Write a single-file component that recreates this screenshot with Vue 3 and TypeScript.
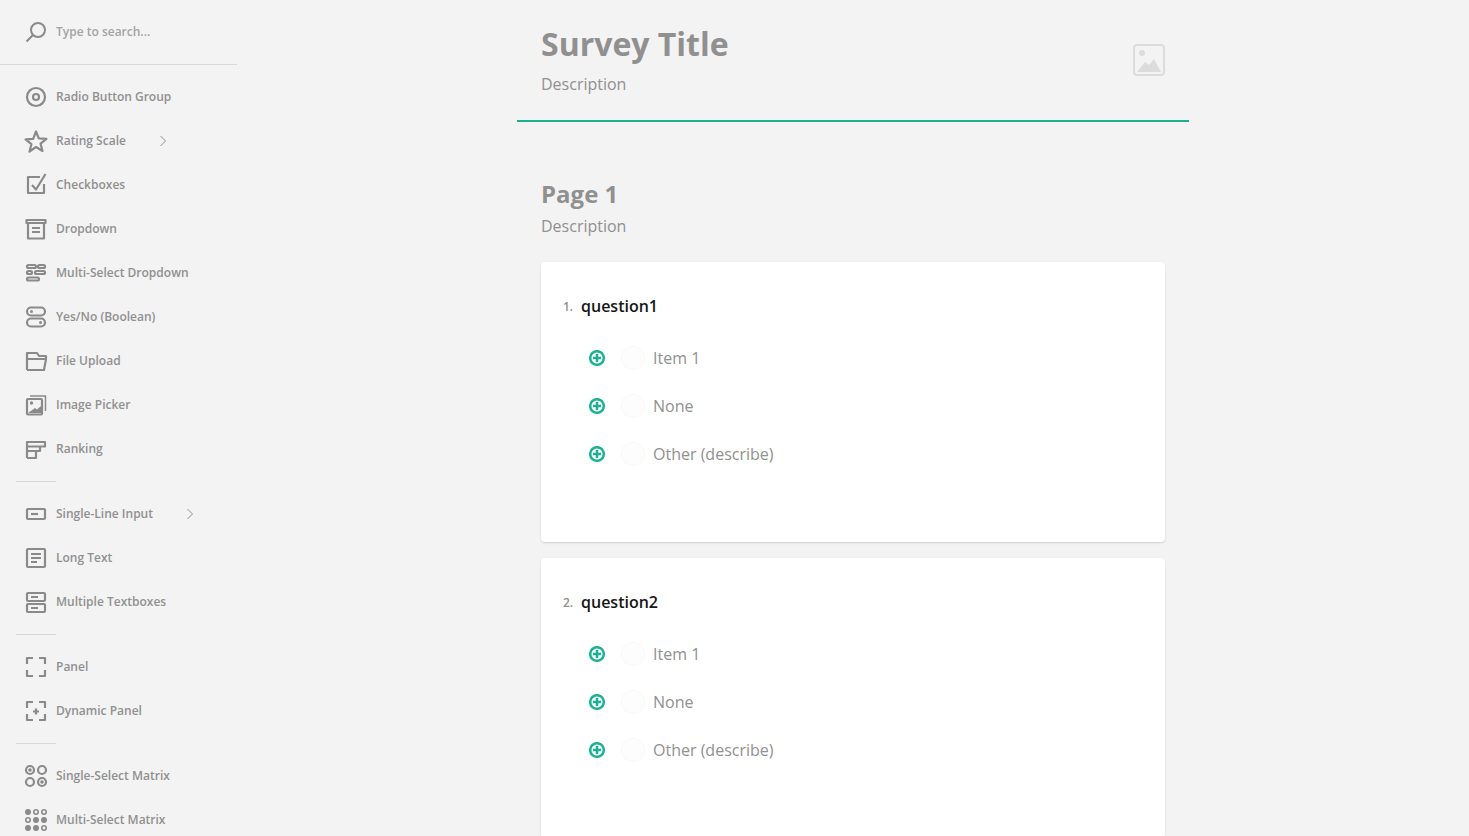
<script setup lang="ts">
interface Item { label: string; icon: string; arrow?: boolean }
const groups: Item[][] = [
  [
    { label: 'Radio Button Group', icon: 'radio' },
    { label: 'Rating Scale', icon: 'star', arrow: true },
    { label: 'Checkboxes', icon: 'check' },
    { label: 'Dropdown', icon: 'dropdown' },
    { label: 'Multi-Select Dropdown', icon: 'multi' },
    { label: 'Yes/No (Boolean)', icon: 'bool' },
    { label: 'File Upload', icon: 'file' },
    { label: 'Image Picker', icon: 'image' },
    { label: 'Ranking', icon: 'ranking' },
  ],
  [
    { label: 'Single-Line Input', icon: 'input', arrow: true },
    { label: 'Long Text', icon: 'long' },
    { label: 'Multiple Textboxes', icon: 'boxes' },
  ],
  [
    { label: 'Panel', icon: 'panel' },
    { label: 'Dynamic Panel', icon: 'dyn' },
  ],
  [
    { label: 'Single-Select Matrix', icon: 'smatrix' },
    { label: 'Multi-Select Matrix', icon: 'mmatrix' },
  ],
]
const questions = [
  { no: '1.', title: 'question1' },
  { no: '2.', title: 'question2' },
]
const choices = ['Item 1', 'None', 'Other (describe)']
const mmDots = [
  { x: 4, y: 4, on: true }, { x: 12, y: 4, on: false }, { x: 20, y: 4, on: false },
  { x: 4, y: 12, on: false }, { x: 12, y: 12, on: true }, { x: 20, y: 12, on: true },
  { x: 4, y: 20, on: true }, { x: 12, y: 20, on: true }, { x: 20, y: 20, on: false },
]
</script>

<template>
  <div class="page">
    <aside class="side">
      <div class="search">
        <svg class="ico" viewBox="0 0 24 24" fill="none" stroke="#8a8a8a" stroke-width="2">
          <circle cx="14" cy="10" r="7" />
          <path d="M9 15l-6.500 6.500" />
        </svg>
        <span class="search-text">Type to search...</span>
      </div>
      <div class="list">
        <template v-for="(group, gi) in groups" :key="gi">
          <div v-if="gi > 0" class="sep"></div>
          <div v-for="item in group" :key="item.label" class="row">
            <svg class="ico" viewBox="0 0 24 24" fill="none" stroke="#8a8a8a" stroke-width="2.200" stroke-linejoin="round">
              <template v-if="item.icon === 'radio'">
                <circle cx="12" cy="12" r="9" /><circle cx="12" cy="12" r="3" />
              </template>
              <path v-else-if="item.icon === 'star'" d="M12 2.500l2.800 6.900 7.600.5-5.800 4.800 1.900 7.300L12 18l-6.500 4.500 1.900-7.300-5.800-4.800 7.600-.5z" />
              <template v-else-if="item.icon === 'check'">
                <path d="M16 4H4v16h16v-9" /><path d="M8 12l4 4.500L21.500 1" />
              </template>
              <template v-else-if="item.icon === 'dropdown'">
                <path d="M2.500 3h19v3h-19zM4 6v15.500h16V6M8 11h8M8 15h8" />
              </template>
              <template v-else-if="item.icon === 'multi'">
                <rect x="3" y="4" width="9" height="3" rx="1.500" /><rect x="14" y="4" width="7" height="3" rx="1.500" />
                <rect x="3" y="10" width="5" height="3" rx="1.500" /><rect x="11" y="10" width="10" height="3" rx="1.500" />
                <rect x="3" y="16.500" width="12" height="3" rx="1.500" />
              </template>
              <template v-else-if="item.icon === 'bool'">
                <rect x="3" y="2.500" width="18" height="8" rx="4" /><rect x="3" y="13.500" width="18" height="8" rx="4" />
                <circle cx="7.500" cy="6.500" r="1.500" fill="#8a8a8a" stroke="none" /><circle cx="16.500" cy="17.500" r="1.500" fill="#8a8a8a" stroke="none" />
              </template>
              <path v-else-if="item.icon === 'file'" d="M3 21V4h10l2 3h7v3H3M3 21h17l2-11" />
              <template v-else-if="item.icon === 'image'">
                <rect x="3" y="6" width="15" height="15.500" rx="1" /><path stroke-width="1.500" d="M6 3h15.500v15" />
                <path fill="#8a8a8a" stroke="none" d="M4 20l7-5 2 1.500 4-3.500v7H4z" /><circle cx="7.500" cy="10" r="1.700" fill="#8a8a8a" stroke="none" />
              </template>
              <path v-else-if="item.icon === 'ranking'" d="M3 21V5h18v4.500H3M3 9.500h13V14H3M3 14h9v7H3" />
              <template v-else-if="item.icon === 'input'">
                <rect x="3" y="7" width="18" height="10" rx="1" /><path d="M7 12h7" />
              </template>
              <template v-else-if="item.icon === 'long'">
                <rect x="3" y="3" width="18" height="18" rx="1" /><path d="M7 8h10M7 12h10M7 16h6" />
              </template>
              <template v-else-if="item.icon === 'boxes'">
                <rect x="3" y="3" width="18" height="8" rx="1" /><rect x="3" y="14" width="18" height="8" rx="1" />
                <path d="M7 7h7M7 18h7" />
              </template>
              <path v-else-if="item.icon === 'panel'" d="M9 3H3v6M15 3h6v6M3 15v6h6M21 15v6h-6" />
              <template v-else-if="item.icon === 'dyn'">
                <path d="M9 3H3v6M15 3h6v6M3 15v6h6M21 15v6h-6" /><path d="M12 9.500v6M9 12.500h6" />
              </template>
              <template v-else-if="item.icon === 'smatrix'">
                <circle cx="6" cy="6" r="4" /><circle cx="6" cy="6" r="1.800" fill="#8a8a8a" stroke="none" />
                <circle cx="18" cy="6" r="4" />
                <circle cx="6" cy="18" r="4" />
                <circle cx="18" cy="18" r="4" /><circle cx="18" cy="18" r="1.800" fill="#8a8a8a" stroke="none" />
              </template>
              <template v-else>
                <circle
                  v-for="d in mmDots"
                  :key="`${d.x}-${d.y}`"
                  :cx="d.x"
                  :cy="d.y"
                  :r="d.on ? 3 : 2.200"
                  :fill="d.on ? '#8a8a8a' : 'none'"
                  :stroke="d.on ? 'none' : '#8a8a8a'"
                  stroke-width="1.600"
                />
              </template>
            </svg>
            <span class="label">{{ item.label }}</span>
            <svg v-if="item.arrow" class="arrow" viewBox="0 0 8 12" fill="none" stroke="#909090" stroke-width="1">
              <path d="M1.500 1l5 5-5 5" />
            </svg>
          </div>
        </template>
      </div>
    </aside>

    <main class="main">
      <div class="survey">
        <header class="head">
          <div>
            <h1 class="title">Survey Title</h1>
            <p class="desc head-desc">Description</p>
          </div>
          <svg class="logo" viewBox="0 0 32 32">
            <rect x="1" y="1" width="30" height="30" rx="3" fill="none" stroke="#dcdcdc" stroke-width="2" />
            <circle cx="9" cy="9" r="3" fill="#dcdcdc" />
            <path fill="#dcdcdc" d="M4 28l8-10 4 3 5-6 7 13z" />
          </svg>
        </header>
        <div class="body">
          <h2 class="page-title">Page 1</h2>
          <p class="desc page-desc">Description</p>
          <section v-for="q in questions" :key="q.no" class="card">
            <div class="q-head">
              <span class="q-no">{{ q.no }}</span>
              <span class="q-title">{{ q.title }}</span>
            </div>
            <div v-for="c in choices" :key="c" class="choice">
              <svg class="plus" viewBox="0 0 16 16" fill="none" stroke="#19b394" stroke-width="2.500">
                <circle cx="8" cy="8" r="6.800" /><path d="M8 4v8M4 8h8" />
              </svg>
              <span class="radio"></span>
              <span class="c-text">{{ c }}</span>
            </div>
          </section>
        </div>
      </div>
    </main>
  </div>
</template>

<style>
html, body { margin: 0; height: 100%; overflow: hidden; background: #f3f3f3; }
</style>

<style scoped>
.page {
  display: flex;
  height: 836px;
  overflow: hidden;
  background: #f3f3f3;
  font-family: "Open Sans", sans-serif;
}
.side { width: 237px; flex: none; }
.search {
  height: 65px;
  box-sizing: border-box;
  display: flex;
  align-items: center;
  padding: 0 0 1px 24px;
  border-bottom: 1px solid #d8d8d8;
}
.search-text { margin-left: 8px; font-size: 12px; font-weight: 600; color: #a3a3a3; }
.list { padding-top: 10px; }
.row { height: 44px; display: flex; align-items: center; padding-left: 24px; }
.ico { width: 24px; height: 24px; flex: none; }
.label { margin-left: 8px; padding-bottom: 2px; font-size: 12px; font-weight: 600; color: #909090; white-space: nowrap; }
.arrow { width: 8px; height: 12px; margin-left: 33px; }
.sep { width: 40px; height: 1px; margin: 10px 0 10px 16px; background: #d8d8d8; }
.main { flex: 1; min-width: 0; display: flex; justify-content: center; }
.survey { width: 672px; }
.head {
  height: 122px;
  box-sizing: border-box;
  border-bottom: 2px solid #19b394;
  padding: 0 24px;
  display: flex;
  justify-content: space-between;
  align-items: flex-start;
}
.title {
  margin: 22px 0 0;
  font-size: 32px;
  line-height: 44px;
  font-weight: 700;
  color: #909090;
}
.desc { margin: 0; font-size: 16px; line-height: 24px; color: #909090; }
.head-desc { margin-top: 6px; }
.logo { width: 32px; height: 32px; margin-top: 44px; }
.body { padding: 56px 24px 0; }
.page-title { margin: 0; font-size: 24px; line-height: 32px; font-weight: 700; color: #909090; }
.page-desc { margin-top: 4px; }
.card {
  height: 280px;
  box-sizing: border-box;
  margin-top: 24px;
  margin-bottom: 16px;
  background: #fff;
  border-radius: 4px;
  box-shadow: 0 1px 2px rgba(0, 0, 0, 0.15);
  padding: 32px 24px 0 22px;
}
.card + .card { margin-top: 0; }
.q-head { height: 24px; margin-bottom: 16px; display: flex; align-items: center; }
.q-no { width: 18px; font-size: 12px; font-weight: 600; color: #909090; }
.q-title { font-size: 16px; color: #161616; font-weight: 600; }
.choice { height: 48px; display: flex; align-items: center; padding-left: 26px; }
.plus { width: 16px; height: 16px; flex: none; }
.radio {
  width: 24px;
  height: 24px;
  flex: none;
  border-radius: 50%;
  margin-left: 16px;
  background: #fdfdfd;
  box-shadow: inset 0 0 0 1px #f8f8f8;
}
.c-text { margin-left: 8px; font-size: 16px; color: #909090; }
</style>
